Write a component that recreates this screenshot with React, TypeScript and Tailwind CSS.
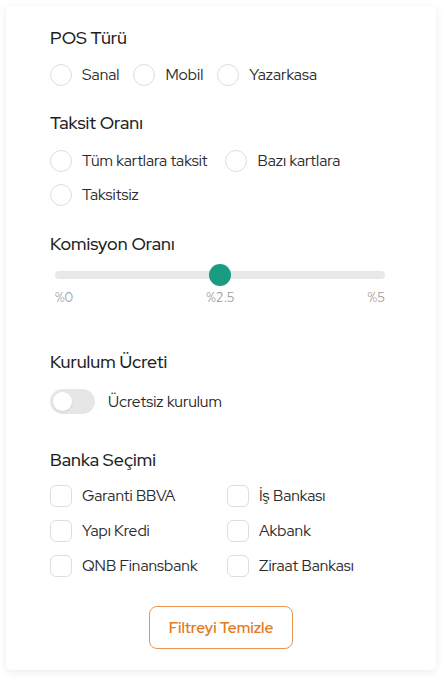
import React from 'react';

const font = { fontFamily: '"Red Hat Display", Lato, "Noto Sans", sans-serif' };

function Radio({ label }: { label: string }) {
  return (
    <label className="flex h-[26px] items-center gap-[10px]">
      <span className="h-[22px] w-[22px] shrink-0 rounded-full border-[1.5px] border-[#dedede] bg-white" />
      <span className="text-[15.6px] text-[#2b2b2b]">{label}</span>
    </label>
  );
}

function Check({ label }: { label: string }) {
  return (
    <label className="flex h-[26px] items-center gap-[10px]">
      <span className="h-[22px] w-[22px] shrink-0 rounded-[6px] border-[1.5px] border-[#dedede] bg-white" />
      <span className="text-[15.6px] text-[#2b2b2b]">{label}</span>
    </label>
  );
}

function Heading({ children }: { children: React.ReactNode }) {
  return <div className="h-6 text-[17.8px] font-medium leading-6 text-[#1f1f1f]">{children}</div>;
}

export default function App() {
  return (
    <div className="min-h-[682px] bg-white pt-[6px]" style={font}>
      <div className="mx-[6px] rounded-b-md bg-white px-[44px] pb-[21px] pt-[20px] shadow-[0_2px_8px_rgba(0,0,0,0.08)]">
        <Heading>POS Türü</Heading>
        <div className="mt-3 flex items-center gap-[14px]">
          <Radio label="Sanal" />
          <Radio label="Mobil" />
          <Radio label="Yazarkasa" />
        </div>

        <div className="mt-[23px]">
          <Heading>Taksit Oranı</Heading>
          <div className="mt-[13px] flex items-center gap-[18px]">
            <Radio label="Tüm kartlara taksit" />
            <Radio label="Bazı kartlara" />
          </div>
          <div className="mt-2">
            <Radio label="Taksitsiz" />
          </div>
        </div>

        <div className="mt-[24px]">
          <Heading>Komisyon Oranı</Heading>
          <div className="mt-2 pl-[5px] pr-[7px]">
            <div className="relative flex h-[22px] items-center">
              <div className="h-[8px] w-full rounded-full bg-[#e8e8e8]" />
              <div className="absolute left-1/2 top-0 h-[22px] w-[22px] -translate-x-1/2 rounded-full bg-[#1b9c82]" />
            </div>
            <div className="mt-[4px] flex h-4 items-center justify-between text-[13px] leading-4 text-[#9a9a9a]">
              <span>%0</span>
              <span>%2.5</span>
              <span>%5</span>
            </div>
          </div>
        </div>

        <div className="mt-[44px]">
          <Heading>Kurulum Ücreti</Heading>
          <div className="mt-[15px] flex items-center gap-[13px]">
            <span className="flex h-[25px] w-[45px] items-center rounded-full bg-[#e6e6e6] px-[3px]">
              <span className="h-[19px] w-[19px] rounded-full bg-white shadow-[0_1px_2px_rgba(0,0,0,0.1)]" />
            </span>
            <span className="text-[15.6px] text-[#2b2b2b]">Ücretsiz kurulum</span>
          </div>
        </div>

        <div className="mt-[34px]">
          <Heading>Banka Seçimi</Heading>
          <div className="mt-[11px] grid grid-cols-[177px_1fr] gap-y-[9px]">
            <Check label="Garanti BBVA" />
            <Check label="İş Bankası" />
            <Check label="Yapı Kredi" />
            <Check label="Akbank" />
            <Check label="QNB Finansbank" />
            <Check label="Ziraat Bankası" />
          </div>
        </div>

        <div className="mt-[27px] flex justify-center">
          <button className="h-[43px] w-[144px] rounded-[8px] border-[1.5px] border-[#eb9650] bg-white text-[15.5px] font-semibold text-[#e27b22]">
            Filtreyi Temizle
          </button>
        </div>
      </div>
    </div>
  );
}
